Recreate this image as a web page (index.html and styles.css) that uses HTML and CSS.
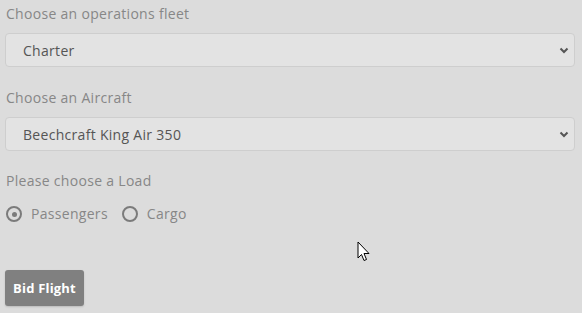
FILE: index.html
```html
<!DOCTYPE html>
<html>
<head>
<meta charset="utf-8">
<link rel="stylesheet" href="styles.css">
</head>
<body>
<form class="form">
  <div class="group">
    <label class="label" for="fleet">Choose an operations fleet</label>
    <div class="select-wrap">
      <select id="fleet" class="select"><option>Charter</option></select>
      <svg class="chevron" width="10" height="7" viewBox="0 0 10 7"><path d="M1.5 1.5 L5 5 L8.5 1.5" fill="none" stroke="#555" stroke-width="2"/></svg>
    </div>
  </div>
  <div class="group">
    <label class="label" for="aircraft">Choose an Aircraft</label>
    <div class="select-wrap">
      <select id="aircraft" class="select"><option>Beechcraft King Air 350</option></select>
      <svg class="chevron" width="10" height="7" viewBox="0 0 10 7"><path d="M1.5 1.5 L5 5 L8.5 1.5" fill="none" stroke="#555" stroke-width="2"/></svg>
    </div>
  </div>
  <div class="group">
    <div class="label">Please choose a Load</div>
    <div class="radios">
      <label class="radio"><span class="dot checked"></span>Passengers</label>
      <label class="radio"><span class="dot"></span>Cargo</label>
    </div>
  </div>
  <button type="button" class="btn">Bid Flight</button>
</form>
<svg class="cursor" width="14" height="22" viewBox="0 0 14 22"><path d="M1 1 L1 17 L4.5 13.5 L7 19.5 L9.5 18.5 L7 12.5 L12 12.5 Z" fill="#fff" stroke="#000" stroke-width="1" stroke-linejoin="miter"/></svg>
</body>
</html>
```
FILE: styles.css
```css
html, body {
  margin: 0;
  padding: 0;
  background: #dcdcdc;
}
body {
  font-family: "Open Sans", "Liberation Sans", sans-serif;
  font-size: 14px;
  letter-spacing: 0.3px;
  color: #878787;
  padding: 4px 7px 0 5px;
  position: relative;
  height: 313px;
  box-sizing: border-box;
  overflow: hidden;
}
.form {
  display: flex;
  flex-direction: column;
}
.group {
  display: flex;
  flex-direction: column;
  margin-bottom: 21px;
}
.group:nth-child(2) {
  margin-bottom: 20px;
}
.label {
  display: block;
  line-height: 20px;
  padding-left: 1px;
  margin-bottom: 9px;
}
.select-wrap {
  position: relative;
}
.select {
  appearance: none;
  -webkit-appearance: none;
  width: 100%;
  height: 34px;
  box-sizing: border-box;
  border: 1px solid #cecece;
  border-radius: 4px;
  background: #e3e3e3;
  font-family: inherit;
  font-size: 14px;
  letter-spacing: 0.3px;
  color: #555;
  padding: 0 0 0 17px;
  margin: 0;
  outline: none;
}
.chevron {
  position: absolute;
  right: 6px;
  top: 14px;
}
.radios {
  display: flex;
  align-items: center;
  gap: 13px;
  margin-top: 4px;
}
.radio {
  display: flex;
  align-items: center;
  line-height: 20px;
  gap: 9px;
  padding-left: 1px;
}
.dot {
  width: 16px;
  height: 16px;
  box-sizing: border-box;
  border: 2px solid #7b7b7b;
  border-radius: 50%;
  display: flex;
  align-items: center;
  justify-content: center;
}
.dot.checked::after {
  content: "";
  width: 5px;
  height: 5px;
  border-radius: 50%;
  background: #7b7b7b;
}
.btn {
  align-self: flex-start;
  margin-top: 25px;
  height: 36px;
  width: 79px;
  border: none;
  border-radius: 3px;
  background: #808080;
  color: #fff;
  font-family: inherit;
  font-weight: bold;
  font-size: 13px;
  letter-spacing: 0.2px;
  padding: 0;
  box-shadow: 0 1px 2px rgba(0,0,0,0.15);
}
.cursor {
  position: absolute;
  left: 357px;
  top: 241px;
}
```
